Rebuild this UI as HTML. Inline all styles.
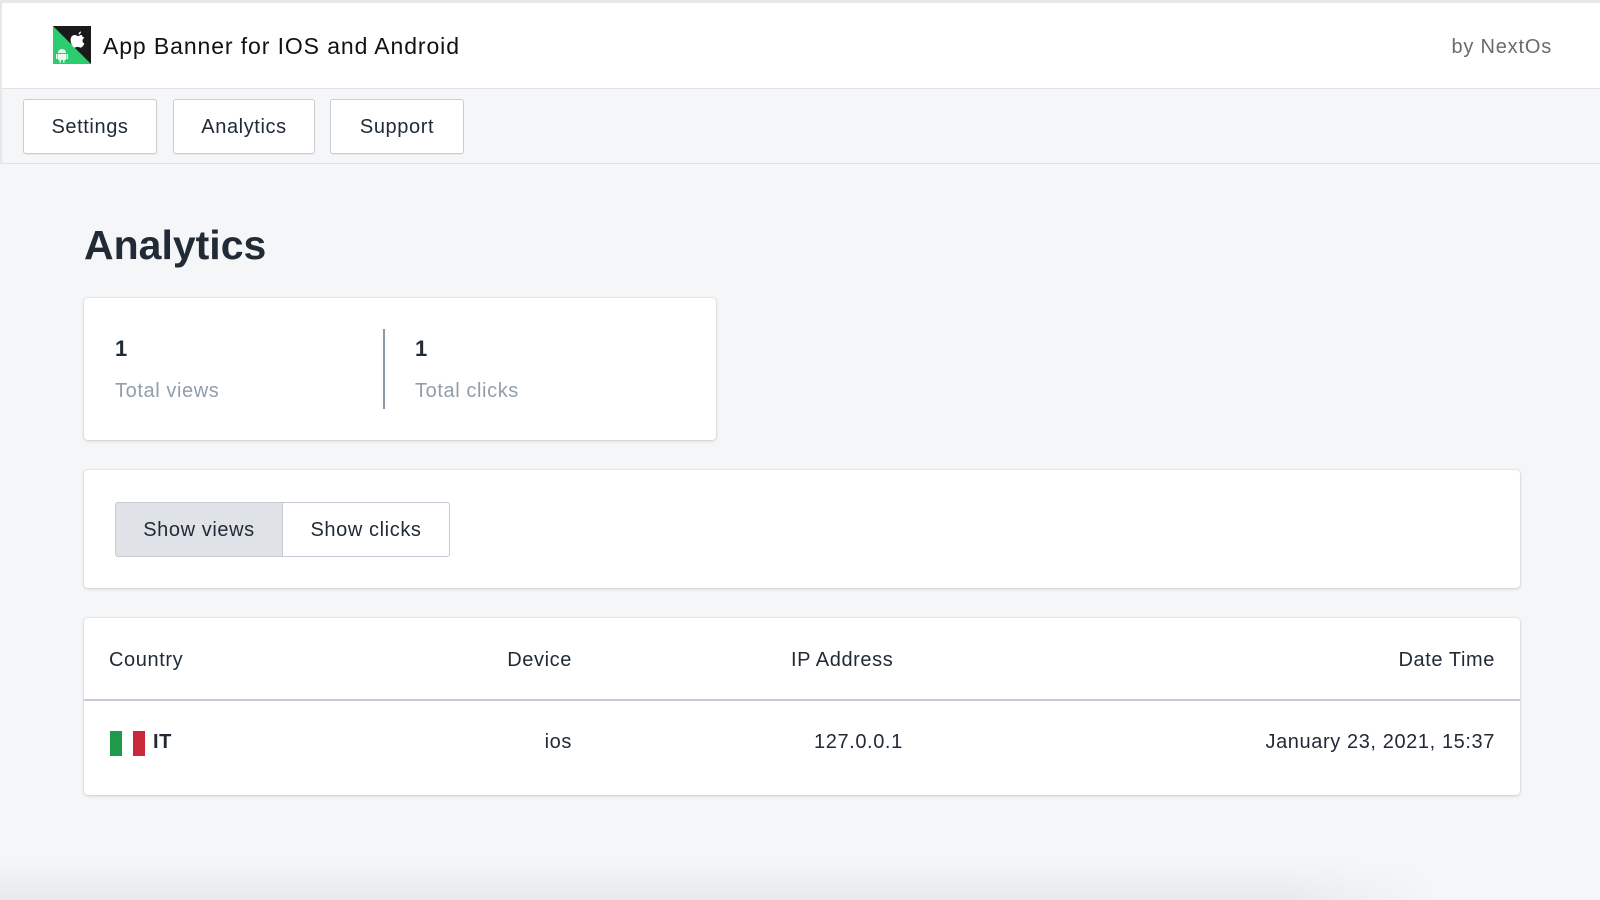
<!DOCTYPE html>
<html><head><style>
*{box-sizing:border-box;margin:0;padding:0}
body{width:1600px;height:900px;overflow:hidden;background:#f4f6f8;font-family:"Liberation Sans",sans-serif;color:#212b36;position:relative;letter-spacing:0.6px}
.hdr{position:absolute;left:0;top:0;width:1600px;height:89px;background:#fff;border-top:3px solid #e8e8e8;border-bottom:1px solid #dfe3e8;border-left:2px solid #e8e8e8}
.logo{position:absolute;left:51px;top:23px;width:38px;height:38px}
.title{position:absolute;left:101px;top:30px;font-size:23px;color:#111;letter-spacing:0.9px}
.by{position:absolute;right:48px;top:33px;font-size:20px;color:#6b6b6b;letter-spacing:0.8px}
.nav{position:absolute;left:0;top:89px;width:1600px;height:75px;border-bottom:1px solid #dfe3e8;border-left:2px solid #e8e8e8}
.tab{position:absolute;top:10px;height:55px;background:#fff;border:1px solid #c9cdd2;border-radius:3px;font-size:20px;color:#212b36;text-align:center;line-height:55px;box-shadow:0 1px 0 rgba(0,0,0,.05)}
h1{position:absolute;left:84px;top:222px;font-size:41px;font-weight:700;color:#212b36;letter-spacing:0}
.card{position:absolute;background:#fff;border-radius:4px;box-shadow:0 0 0 1px rgba(63,63,68,.06),0 1px 3px rgba(63,63,68,.18)}
.num{position:absolute;font-size:22px;font-weight:700;color:#212b36}
.lab{position:absolute;font-size:20px;color:#919eab}
.btn{position:absolute;top:32px;height:55px;font-size:20px;line-height:55px;text-align:center;border:1px solid #c4cdd5}
.th,.td{position:absolute;font-size:20px;color:#212b36}
</style></head><body>
<div class="hdr">
<svg class="logo" viewBox="0 0 38 38"><rect width="38" height="38" fill="#2ecc71"/><polygon points="0,0 38,0 38,38" fill="#1a1a1a"/><path d="M29 9c-2.2 0-3.5 1.2-4 1.2-.6 0-1.7-1.2-3.4-1.2-2 0-4 1.7-4 5 0 3.5 2.4 7.6 4 7.6 1 0 1.5-.7 3-.7s1.8.7 3 .7c1.7 0 3.6-3.3 3.8-4-2.3-1-2.6-4.5-.2-5.6-.7-1-1.8-1.6-2.200-1.6z" fill="#fff"/><path d="M25.5 8.5c0-1.4 1-2.8 2.5-3 .1 1.5-1 2.9-2.5 3z" fill="#fff"/><path d="M5 27a4 4 0 0 1 8 0z M5 28h8v6H5z M3 28h1.5v5H3z M13.5 28H15v5h-1.5z M6.5 34h1.5v2.5H6.5z M10 34h1.5v2.5H10z" fill="#fff" opacity=".9"/></svg>
<div class="title">App Banner for IOS and Android</div>
<div class="by">by NextOs</div>
</div>
<div class="nav">
<div class="tab" style="left:21px;width:134px">Settings</div>
<div class="tab" style="left:171px;width:142px">Analytics</div>
<div class="tab" style="left:328px;width:134px">Support</div>
</div>
<h1>Analytics</h1>
<div class="card" style="left:84px;top:298px;width:632px;height:142px">
<div class="num" style="left:31px;top:38px">1</div>
<div class="lab" style="left:31px;top:82px">Total views</div>
<div style="position:absolute;left:299px;top:31px;width:2px;height:80px;background:#8c98a5"></div>
<div class="num" style="left:331px;top:38px">1</div>
<div class="lab" style="left:331px;top:82px">Total clicks</div>
</div>
<div class="card" style="left:84px;top:470px;width:1436px;height:118px">
<div class="btn" style="left:31px;width:168px;background:#dfe3e8;border-radius:3px 0 0 3px">Show views</div>
<div class="btn" style="left:198px;width:168px;background:#fff;border-radius:0 3px 3px 0">Show clicks</div>
</div>
<div class="card" style="left:84px;top:618px;width:1436px;height:177px">
<div class="th" style="left:25px;top:31px">Country</div>
<div class="th" style="right:948px;top:31px">Device</div>
<div class="th" style="left:707px;top:31px">IP Address</div>
<div class="th" style="right:25px;top:31px">Date Time</div>
<div style="position:absolute;left:0;right:0;top:81px;height:2px;background:#c4cdd5"></div>
<div style="position:absolute;left:26px;top:113px;width:12px;height:25px;background:#1f9a48"></div>
<div style="position:absolute;left:49px;top:113px;width:12px;height:25px;background:#c8283a"></div>
<div class="td" style="left:69px;top:113px;font-weight:700">IT</div>
<div class="td" style="right:948px;top:113px">ios</div>
<div class="td" style="left:730px;top:113px">127.0.0.1</div>
<div class="td" style="right:25px;top:113px">January 23, 2021, 15:37</div>
</div>
<div style="position:absolute;left:0;top:860px;width:1600px;height:40px;background:linear-gradient(rgba(0,0,0,0),rgba(0,0,0,.05));-webkit-mask-image:linear-gradient(90deg,#000 80%,transparent 90%);mask-image:linear-gradient(90deg,#000 80%,transparent 90%)"></div>
</body></html>
